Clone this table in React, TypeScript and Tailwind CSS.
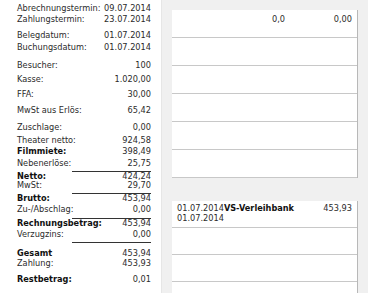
type Row = {
  label: string;
  value: string;
  h: string;
  bold?: boolean;
  line?: string;
};

const ROWS: Row[] = [
  { label: 'Abrechnungstermin:', value: '09.07.2014', h: 'h-[11px]' },
  { label: 'Zahlungstermin:', value: '23.07.2014', h: 'h-[16px]' },
  { label: 'Belegdatum:', value: '01.07.2014', h: 'h-[12px]' },
  { label: 'Buchungsdatum:', value: '01.07.2014', h: 'h-[18px]' },
  { label: 'Besucher:', value: '100', h: 'h-[14px]' },
  { label: 'Kasse:', value: '1.020,00', h: 'h-[15px]' },
  { label: 'FFA:', value: '30,00', h: 'h-[16px]' },
  { label: 'MwSt aus Erlös:', value: '65,42', h: 'h-[17px]' },
  { label: 'Zuschlage:', value: '0,00', h: 'h-[13px]' },
  { label: 'Theater netto:', value: '924,58', h: 'h-[11px]' },
  { label: 'Filmmiete:', value: '398,49', h: 'h-[12px]', bold: true },
  { label: 'Nebenerlöse:', value: '25,75', h: 'h-[12px]', line: 'mb-0' },
  { label: 'Netto:', value: '424,24', h: 'h-[9px]', bold: true },
  { label: 'MwSt:', value: '29,70', h: 'h-[12px]', line: 'mb-0' },
  { label: 'Brutto:', value: '453,94', h: 'h-[11px]', bold: true },
  { label: 'Zu-/Abschlag:', value: '0,00', h: 'h-[13px]', line: 'mb-0' },
  { label: 'Rechnungsbetrag:', value: '453,94', h: 'h-[11px]', bold: true },
  { label: 'Verzugzins:', value: '0,00', h: 'h-[12px]', line: 'mb-[6px]' },
  { label: 'Gesamt', value: '453,94', h: 'h-[10px]', bold: true },
  { label: 'Zahlung:', value: '453,93', h: 'h-[16px]' },
  { label: 'Restbetrag:', value: '0,01', h: 'h-[11px]', bold: true },
];

function Summary() {
  return (
    <div className="w-[162px] shrink-0 bg-white border-r border-[#e6e6e6] pl-[17px] pt-[4px]">
      <div className="w-[134px]">
        {ROWS.map((r) => (
          <div key={r.label}>
            <div className={`${r.h} flex justify-between leading-[9px] whitespace-nowrap`}>
              <span className={r.bold ? 'font-bold text-[#111]' : ''}>{r.label}</span>
              <span>{r.value}</span>
            </div>
            {r.line && <div className={`ml-[55px] w-[79px] h-px bg-[#333] ${r.line}`} />}
          </div>
        ))}
      </div>
    </div>
  );
}

function EmptyRows({ count, h }: { count: number; h: string }) {
  return (
    <>
      {Array.from({ length: count }).map((_, i) => (
        <div key={i} className={`${h} border-b border-[#c8c8c8]`} />
      ))}
    </>
  );
}

export default function App() {
  return (
    <div className="flex w-[368px] h-[293px] overflow-hidden text-[8.2px] text-[#2b2b2b] font-['DejaVu_Sans',sans-serif]">
      <Summary />

      <div className="flex-1 bg-[#f0f0f0] pl-[10px] pr-[10px] pt-[10px]">
        {/* Positionen */}
        <div className="bg-white border-r border-[#b8b8b8]">
          <div className="h-[28px] border-b border-[#c8c8c8] flex pt-[4px] leading-[11px]">
            <span className="w-[113px] text-right">0,0</span>
            <span className="flex-1 text-right pr-[5px]">0,00</span>
          </div>
          <EmptyRows count={5} h="h-[28px]" />
        </div>

        {/* Zahlungen */}
        <div className="mt-[23px] bg-white border-r border-[#b8b8b8]">
          <div className="h-[27px] border-b border-[#c8c8c8] pl-[5px] pr-[5px] pt-[2px] leading-[10px]">
            <div className="flex justify-between">
              <span>
                01.07.2014<span className="font-bold text-[#111]">VS-Verleihbank</span>
              </span>
              <span>453,93</span>
            </div>
            <div>01.07.2014</div>
          </div>
          <EmptyRows count={3} h="h-[27px]" />
        </div>
      </div>
    </div>
  );
}
